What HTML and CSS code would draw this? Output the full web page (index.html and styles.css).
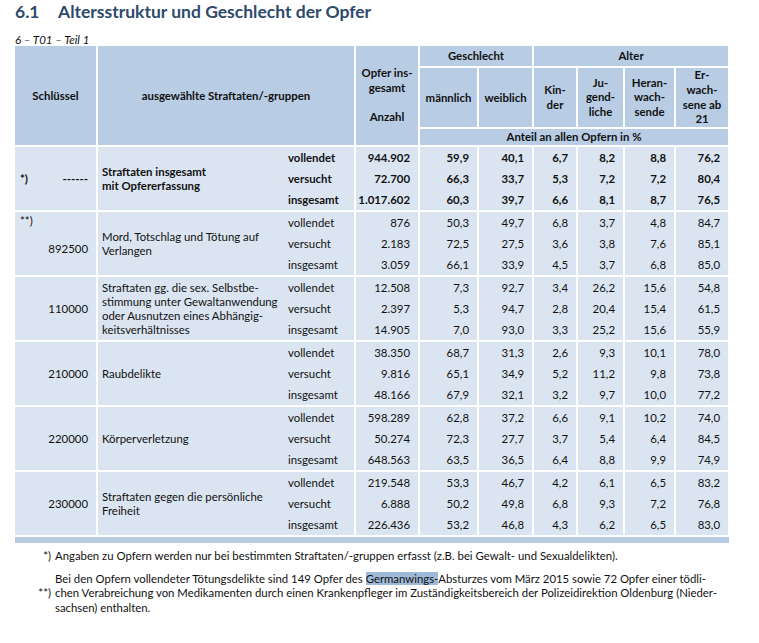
FILE: index.html
```html
<!DOCTYPE html>
<html lang="de">
<head>
<meta charset="utf-8">
<title>6.1 Altersstruktur und Geschlecht der Opfer</title>
<link rel="stylesheet" href="styles.css">
</head>
<body>
<h1 class="title"><span class="num">6.1</span><span>Altersstruktur und Geschlecht der Opfer</span></h1>
<div class="caption">6 – T01 – Teil 1</div>
<table class="tbl">
  <colgroup>
    <col class="c-key"><col class="c-text"><col class="c-status"><col class="c-total">
    <col class="c-m"><col class="c-w"><col class="c-k"><col class="c-j"><col class="c-h"><col class="c-e">
  </colgroup>
  <thead>
    <tr class="h1">
      <th rowspan="3">Schlüssel</th>
      <th rowspan="3" colspan="2">ausgewählte Straftaten/-gruppen</th>
      <th rowspan="3" class="lh">Opfer ins-<br>gesamt<br><br>Anzahl</th>
      <th colspan="2">Geschlecht</th>
      <th colspan="4">Alter</th>
    </tr>
    <tr class="h2">
      <th>männlich</th>
      <th>weiblich</th>
      <th class="lh">Kin-<br>der</th>
      <th class="lh">Ju-<br>gend-<br>liche</th>
      <th class="lh">Heran-<br>wach-<br>sende</th>
      <th class="lh">Er-<br>wach-<br>sene ab<br>21</th>
    </tr>
    <tr class="h3">
      <th colspan="6">Anteil an allen Opfern in %</th>
    </tr>
  </thead>
  <tbody class="grp bold">
    <tr class="first">
      <td rowspan="3" class="key"><span class="key-row"><span>*)</span><span>------</span></span></td>
      <td rowspan="3" class="txt">Straftaten insgesamt<br>mit Opfererfassung</td>
      <td class="st">vollendet</td><td>944.902</td><td>59,9</td><td>40,1</td><td>6,7</td><td>8,2</td><td>8,8</td><td>76,2</td>
    </tr>
    <tr><td class="st">versucht</td><td>72.700</td><td>66,3</td><td>33,7</td><td>5,3</td><td>7,2</td><td>7,2</td><td>80,4</td></tr>
    <tr><td class="st">insgesamt</td><td>1.017.602</td><td>60,3</td><td>39,7</td><td>6,6</td><td>8,1</td><td>8,7</td><td>76,5</td></tr>
  </tbody>
  <tbody class="grp">
    <tr class="first">
      <td rowspan="3" class="key top"><div class="mark">**)</div><div class="keynum">892500</div></td>
      <td rowspan="3" class="txt">Mord, Totschlag und Tötung auf<br>Verlangen</td>
      <td class="st">vollendet</td><td>876</td><td>50,3</td><td>49,7</td><td>6,8</td><td>3,7</td><td>4,8</td><td>84,7</td>
    </tr>
    <tr><td class="st">versucht</td><td>2.183</td><td>72,5</td><td>27,5</td><td>3,6</td><td>3,8</td><td>7,6</td><td>85,1</td></tr>
    <tr><td class="st">insgesamt</td><td>3.059</td><td>66,1</td><td>33,9</td><td>4,5</td><td>3,7</td><td>6,8</td><td>85,0</td></tr>
  </tbody>
  <tbody class="grp">
    <tr class="first">
      <td rowspan="3" class="key">110000</td>
      <td rowspan="3" class="txt">Straftaten gg. die sex. Selbstbe-<br>stimmung unter Gewaltanwendung<br>oder Ausnutzen eines Abhängig-<br>keitsverhältnisses</td>
      <td class="st">vollendet</td><td>12.508</td><td>7,3</td><td>92,7</td><td>3,4</td><td>26,2</td><td>15,6</td><td>54,8</td>
    </tr>
    <tr><td class="st">versucht</td><td>2.397</td><td>5,3</td><td>94,7</td><td>2,8</td><td>20,4</td><td>15,4</td><td>61,5</td></tr>
    <tr><td class="st">insgesamt</td><td>14.905</td><td>7,0</td><td>93,0</td><td>3,3</td><td>25,2</td><td>15,6</td><td>55,9</td></tr>
  </tbody>
  <tbody class="grp">
    <tr class="first">
      <td rowspan="3" class="key">210000</td>
      <td rowspan="3" class="txt">Raubdelikte</td>
      <td class="st">vollendet</td><td>38.350</td><td>68,7</td><td>31,3</td><td>2,6</td><td>9,3</td><td>10,1</td><td>78,0</td>
    </tr>
    <tr><td class="st">versucht</td><td>9.816</td><td>65,1</td><td>34,9</td><td>5,2</td><td>11,2</td><td>9,8</td><td>73,8</td></tr>
    <tr><td class="st">insgesamt</td><td>48.166</td><td>67,9</td><td>32,1</td><td>3,2</td><td>9,7</td><td>10,0</td><td>77,2</td></tr>
  </tbody>
  <tbody class="grp">
    <tr class="first">
      <td rowspan="3" class="key">220000</td>
      <td rowspan="3" class="txt">Körperverletzung</td>
      <td class="st">vollendet</td><td>598.289</td><td>62,8</td><td>37,2</td><td>6,6</td><td>9,1</td><td>10,2</td><td>74,0</td>
    </tr>
    <tr><td class="st">versucht</td><td>50.274</td><td>72,3</td><td>27,7</td><td>3,7</td><td>5,4</td><td>6,4</td><td>84,5</td></tr>
    <tr><td class="st">insgesamt</td><td>648.563</td><td>63,5</td><td>36,5</td><td>6,4</td><td>8,8</td><td>9,9</td><td>74,9</td></tr>
  </tbody>
  <tbody class="grp">
    <tr class="first">
      <td rowspan="3" class="key">230000</td>
      <td rowspan="3" class="txt">Straftaten gegen die persönliche<br>Freiheit</td>
      <td class="st">vollendet</td><td>219.548</td><td>53,3</td><td>46,7</td><td>4,2</td><td>6,1</td><td>6,5</td><td>83,2</td>
    </tr>
    <tr><td class="st">versucht</td><td>6.888</td><td>50,2</td><td>49,8</td><td>6,8</td><td>9,3</td><td>7,2</td><td>76,8</td></tr>
    <tr><td class="st">insgesamt</td><td>226.436</td><td>53,2</td><td>46,8</td><td>4,3</td><td>6,2</td><td>6,5</td><td>83,0</td></tr>
  </tbody>
  <tfoot>
    <tr><td colspan="10" class="bar"></td></tr>
  </tfoot>
</table>
<div class="notes">
  <div class="mk">*)</div>
  <div class="nt">Angaben zu Opfern werden nur bei bestimmten Straftaten/-gruppen erfasst (z.B. bei Gewalt- und Sexualdelikten).</div>
  <div class="mk">**)</div>
  <div class="nt">Bei den Opfern vollendeter Tötungsdelikte sind 149 Opfer des <span class="sel">Germanwings-</span>Absturzes vom März 2015 sowie 72 Opfer einer tödli-<br>chen Verabreichung von Medikamenten durch einen Krankenpfleger im Zuständigkeitsbereich der Polizeidirektion Oldenburg (Nieder-<br>sachsen) enthalten.</div>
</div>
</body>
</html>
```
FILE: styles.css
```css
html, body {
  margin: 0;
  padding: 0;
  background: #ffffff;
}
body {
  padding: 0 15px;
  font-family: Lato, "Open Sans", "Noto Sans", sans-serif;
  color: #1a1a1a;
  font-size: 11px;
}
.title {
  margin: 0;
  padding-top: 1px;
  font-size: 17.5px;
  line-height: 22px;
  font-weight: 700;
  color: #2d4a6d;
  display: flex;
  white-space: nowrap;
}
.title .num {
  width: 43px;
}
.caption {
  margin-top: 10px;
  font-style: italic;
  font-size: 11.5px;
  line-height: 13px;
  color: #111;
}
.tbl {
  width: 714px;
  table-layout: fixed;
  border-collapse: collapse;
  font-size: 11.4px;
  color: #111;
}
.c-key { width: 82px; }
.c-text { width: 187px; }
.c-status { width: 71px; }
.c-total { width: 64px; }
.c-m { width: 59px; }
.c-w { width: 55px; }
.c-k { width: 44px; }
.c-j { width: 47px; }
.c-h { width: 51px; }
.c-e { width: 54px; }

.tbl th {
  background: #b8cce4;
  border: 2px solid #ffffff;
  font-weight: 700;
  text-align: center;
  vertical-align: middle;
  padding: 0 2px;
  line-height: 14px;
  white-space: nowrap;
}
.tbl thead tr:first-child th { border-top: 0; }
.tbl th:first-child { border-left: 0; }
.tbl th.lh { line-height: 14.6px; }
.tbl tr.h1 { height: 21px; }
.tbl tr.h2 { height: 61px; }
.tbl tr.h3 { height: 18px; }

.tbl td {
  background: #dbe5f1;
  border-left: 2px solid #ffffff;
  border-right: 2px solid #ffffff;
  text-align: right;
  padding: 0 8px 0 2px;
  height: 21px;
  line-height: 14px;
  white-space: nowrap;
  vertical-align: middle;
}
.tbl td:first-child { border-left: 0; }
.tbl tbody tr.first td { border-top: 2px solid #ffffff; }
.tbl td.txt {
  text-align: left;
  padding: 0 2px 0 4px;
  border-right: 0;
}
.tbl td.st {
  text-align: left;
  padding: 0 2px 0 4px;
  border-left: 0;
}
.tbl td.key { padding-right: 8px; }
.key-row {
  display: flex;
  justify-content: space-between;
  padding-left: 3px;
}
.tbl td.key.top { vertical-align: top; }
.mark {
  text-align: left;
  padding-left: 3px;
  padding-top: 2px;
}
.keynum { padding-top: 14px; }
.grp.bold td { font-weight: 700; }
.tbl td.bar {
  background: #b8cce4;
  height: 6px;
  padding: 0;
  border: 0;
  border-top: 2px solid #ffffff;
}
.notes {
  margin-top: 6px;
  display: grid;
  grid-template-columns: 36px 1fr;
  column-gap: 4px;
  row-gap: 8px;
  font-size: 11.35px;
  line-height: 14.5px;
  color: #111;
}
.mk {
  text-align: right;
  align-self: center;
}
.nt { white-space: nowrap; }
.sel { background: #9fbad8; }
```
